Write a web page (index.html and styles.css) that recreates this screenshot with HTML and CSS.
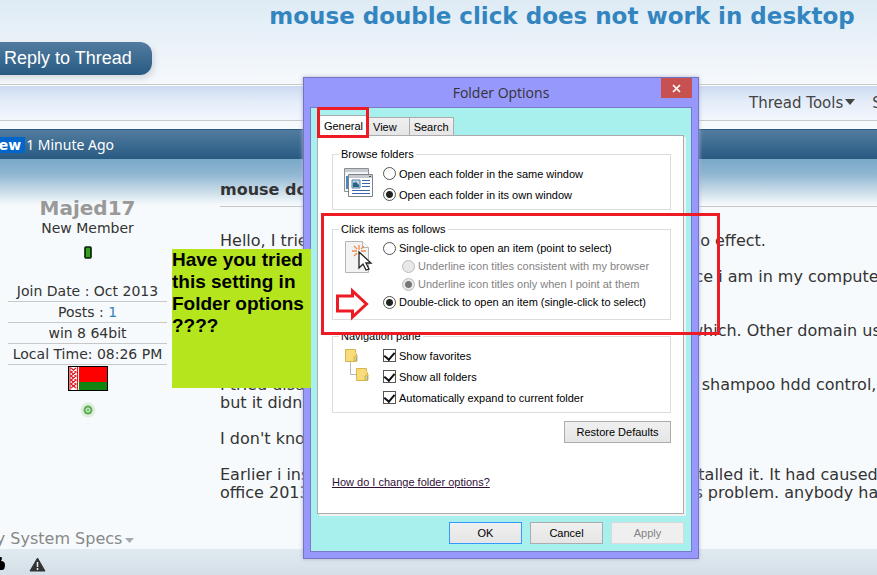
FILE: index.html
```
<!DOCTYPE html>
<html lang="en">
<head>
    <meta charset="UTF-8">
    <meta name="viewport" content="width=device-width, initial-scale=1.0">
    <title>mouse double click does not work in desktop</title>
    <link rel="stylesheet" href="styles.css">
</head>
<body>
    <div class="page">
        <header class="thread-head">
            <h1>mouse double click does not work in desktop</h1>
            <button type="button" class="reply">Reply to Thread</button>
        </header>

        <nav class="toolbar">
            <a href="#">Thread Tools<svg width="10" height="6" viewBox="0 0 10 6"><path d="M0 0h10L5 6z" fill="#444"/></svg></a>
            <a href="#">Search Thread</a>
        </nav>

        <article class="post">
            <div class="post-head"><span class="new">New</span><time>1 Minute Ago</time></div>
            <div class="post-main">
                <aside class="user">
                    <h2>Majed17</h2>
                    <p class="rank">New Member</p>
                    <svg class="rep" width="8" height="13" viewBox="0 0 8 13"><rect x="1" y="1" width="6" height="11" rx="1" fill="#32a01c" stroke="#061c04" stroke-width="1.6"/></svg>
                    <ul>
                        <li>Join Date : Oct 2013</li>
                        <li>Posts : <a href="#">1</a></li>
                        <li>win 8 64bit</li>
                        <li>Local Time: 08:26 PM</li>
                    </ul>
                    <svg class="flag" width="40" height="25" viewBox="0 0 40 25">
                        <path fill="#000" d="M0 0h40v25H0z"/>
                        <path fill="#f00" d="M1 1h38v15H1z"/>
                        <path fill="#128412" d="M1 16h38v8H1z"/>
                        <path fill="#fff" d="M1 1h10v23H1z"/>
                        <path fill="none" stroke="#e01c24" stroke-width="1.2" d="M2 1v23M9.500 1v23M3 2l5 4-5 4 5 4-5 4 5 4M8 2L3 6l5 4-5 4 5 4-5 4"/>
                    </svg>
                    <svg class="ring" width="16" height="16" viewBox="0 0 16 16">
                        <circle cx="8" cy="8" r="7.500" fill="#dfeede"/>
                        <circle cx="8" cy="8" r="4.500" fill="#5fb054"/>
                        <circle cx="8" cy="8" r="2" fill="#7cc272" stroke="#d8efd4"/>
                    </svg>
                </aside>
                <section class="message">
                    <h3>mouse double click</h3>
                    <p><span>Hello, I tried</span><span>no effect.</span></p>
                    <p class="tall"><span></span><span>ice i am in my computer</span></p>
                    <p class="tall"><span></span><span>which. Other domain users</span></p>
                    <p class="joined"><span>I tried disabling</span><span>r shampoo hdd control,</span></p>
                    <p><span>but it didn't</span></p>
                    <p><span>I don't know</span></p>
                    <p class="joined"><span>Earlier i installed</span><span>stalled it. It had caused</span></p>
                    <p><span>office 2013</span><span>is problem. anybody has</span></p>
                </section>
            </div>
            <a href="#" class="specs">My System Specs<svg width="9" height="5" viewBox="0 0 9 5"><path d="M0 0h9L4.500 5z" fill="#aaa"/></svg></a>
        </article>

        <footer class="post-foot">
            <svg width="14" height="15" viewBox="0 0 14 15"><path d="M0 4h6l3-4c3 0 2 2 1 4 3 0 4 2 4 4 0 3-1 5-3 5H0z" fill="#000"/></svg>
            <svg width="17" height="15" viewBox="0 0 17 15"><path d="M8.500 1L16 14H1z" fill="#333" stroke="#333" stroke-linejoin="round"/><path d="M8.500 5v5M8.500 11v2" stroke="#e8eef2" stroke-width="1.500"/></svg>
        </footer>
    </div>

    <div class="dialog" role="dialog" aria-labelledby="dialog-title">
        <div class="titlebar">
            <span id="dialog-title">Folder Options</span>
            <button type="button" class="close" aria-label="Close"><svg width="9" height="9" viewBox="0 0 9 9"><path d="M1 1l7 7M8 1L1 8" stroke="#fff" stroke-width="1.700"/></svg></button>
        </div>
        <div class="client">
            <div class="tabs" role="tablist">
                <button type="button" role="tab" aria-selected="true" class="active">General</button>
                <button type="button" role="tab">View</button>
                <button type="button" role="tab">Search</button>
            </div>
            <form class="panel">
                <fieldset>
                    <legend>Browse folders</legend>
                    <div class="group">
                        <svg class="pic" width="30" height="30" viewBox="0 0 30 30">
                            <path d="M.5.500h24v23H.5z" fill="#f4f6f8" stroke="#8b9096"/>
                            <path d="M1 1h23v3H1z" fill="#c4cacf"/>
                            <path d="M3 8v13" stroke="#4a86bd" stroke-width="2"/>
                            <path d="M4.500 6.500h24v22h-24z" fill="#fff" stroke="#7d8389"/>
                            <path d="M5 7h23v3H5z" fill="#c4cacf"/>
                            <path d="M25 8.500h2" stroke="#4d5358"/>
                            <path d="M8 12h8v8H8z" fill="#b9d9f0" stroke="#5d7f9e"/>
                            <path d="M9 19v-4l3-1 3 3v2z" fill="#2c6484"/>
                            <path d="M18 12.500h8M18 15.500h8M18 18.500h8M8 22.500h18M8 25.500h18" stroke="#3b66ad"/>
                        </svg>
                        <div class="options">
                            <label><input type="radio" name="browse">Open each folder in the same window</label>
                            <label><input type="radio" name="browse" checked>Open each folder in its own window</label>
                        </div>
                    </div>
                </fieldset>
                <fieldset class="clicks">
                    <legend>Click items as follows</legend>
                    <div class="group">
                        <svg class="pic" width="30" height="34" viewBox="0 0 30 34">
                            <path d="M1.500 1.500h17l6 6v25h-23z" fill="#f3f3f3" stroke="#b5b5b5"/>
                            <path d="M18.500 1.500v6h6" fill="#fff" stroke="#b5b5b5"/>
                            <path d="M15 5v5M8 11h5M17 11h5M10 6l3 3M20 6l-3 3M10 16l3-3" stroke="#f08a50" stroke-width="1.300"/>
                            <path d="M15 12v16l4-4 3 6 3-1-3-6h5z" fill="#fff" stroke="#222" stroke-width="1.300"/>
                        </svg>
                        <div class="options">
                            <label><input type="radio" name="click">Single-click to open an item (point to select)</label>
                            <label class="sub"><input type="radio" name="underline" disabled>Underline icon titles consistent with my browser</label>
                            <label class="sub"><input type="radio" name="underline" disabled checked>Underline icon titles only when I point at them</label>
                            <label><input type="radio" name="click" checked>Double-click to open an item (single-click to select)</label>
                        </div>
                    </div>
                </fieldset>
                <fieldset>
                    <legend>Navigation pane</legend>
                    <div class="group">
                        <svg class="pic nav-pic" width="30" height="36" viewBox="0 0 30 36">
                            <path d="M6.500 14v12.500H13" fill="none" stroke="#b8b8b8"/>
                            <path d="M1.500 1.500h10v3l1 1v8h-11z" fill="#f8dc7c" stroke="#d9b34c"/>
                            <path d="M10 13V9l3-2v6z" fill="#f3cd60" stroke="#d9b34c"/>
                            <path d="M12.500 9v4" stroke="#6fb7d8"/>
                            <path d="M12.500 20.500h10v3l1 1v8h-11z" fill="#f8dc7c" stroke="#d9b34c"/>
                            <path d="M21 32v-4l3-2v6z" fill="#f3cd60" stroke="#d9b34c"/>
                            <path d="M23.500 28v4" stroke="#6fb7d8"/>
                        </svg>
                        <div class="options">
                            <label><input type="checkbox" checked>Show favorites</label>
                            <label><input type="checkbox" checked>Show all folders</label>
                            <label><input type="checkbox" checked>Automatically expand to current folder</label>
                        </div>
                    </div>
                </fieldset>
                <button type="button" class="btn restore">Restore Defaults</button>
                <a href="#" class="help">How do I change folder options?</a>
            </form>
            <div class="actions">
                <button type="button" class="btn ok">OK</button>
                <button type="button" class="btn">Cancel</button>
                <button type="button" class="btn" disabled>Apply</button>
            </div>
        </div>
    </div>

    <div class="mark mark-tab"></div>
    <div class="mark mark-clicks"></div>
    <svg class="arrow" width="35" height="34" viewBox="0 0 35 34"><path d="M2.500 9h15V4l14 13-14 13v-6h-15z" fill="none" stroke="#ed1c24" stroke-width="3"/></svg>
    <p class="note">Have you tried this setting in Folder options ????</p>
</body>
</html>
```
FILE: styles.css
```
* {
    box-sizing: border-box;
}

body {
    margin: 0;
    overflow: hidden;
    background: #f7fafc;
    color: #333;
    font-family: Verdana, "DejaVu Sans", sans-serif;
    font-size: 16px;
}

h1, h2, h3, p, ul {
    margin: 0;
    padding: 0;
}

a {
    color: inherit;
    text-decoration: none;
}

.page {
    min-height: 100vh;
    display: flex;
    flex-direction: column;
    overflow: hidden;
}

/* thread header */
.thread-head {
    height: 85px;
    background: linear-gradient(#deebf5, #f6f9fc);
    border-bottom: 1px solid #c8c8c8;
}

.thread-head h1 {
    padding-left: 247px;
    color: #3385c0;
    font-size: 23px;
    line-height: 32px;
    text-align: center;
    white-space: nowrap;
}

.reply {
    display: block;
    height: 33px;
    margin: 10px 0 0 -20px;
    padding: 0 20px 0 24px;
    border: 0;
    border-radius: 12px;
    background: linear-gradient(#527c9f, #285a82);
    box-shadow: 2px 3px 6px #d0d6dc;
    color: #fff;
    font-family: "Liberation Sans", Arial, sans-serif;
    font-size: 18px;
}

.toolbar {
    display: flex;
    justify-content: flex-end;
    gap: 17px;
    height: 36px;
    margin-right: -104px;
    border-top: 1px solid #fff;
    border-bottom: 1px solid #c8c8c8;
    background: linear-gradient(#ccdaf0, #e6eefa 50%, #f2f6fd);
    color: #444;
    font-size: 15px;
    line-height: 34px;
    white-space: nowrap;
}

.toolbar svg {
    margin: 0 0 3px 2px;
}

/* post */
.post {
    flex: 1;
    margin-top: 8px;
}

.post-head {
    display: flex;
    align-items: center;
    height: 30px;
    margin-left: -13px;
    border-top: 1px solid #285a82;
    background: linear-gradient(#527c9f, #285a82);
    color: #fff;
    font-size: 14px;
}

.post-head time {
    font-family: "Noto Sans", "Open Sans", sans-serif;
}

.new {
    padding-right: 4px;
    margin-right: 1px;
    background: #0066cc;
    font-weight: bold;
    line-height: 16px;
}

.post-main {
    display: flex;
    height: 370px;
    background: linear-gradient(#7aa8c8, #8fb6d1 15px, #f7fafc 46px);
}

.user {
    flex: none;
    width: 175px;
    padding: 36px 8px 0;
    display: flex;
    flex-direction: column;
    align-items: center;
    font-size: 14px;
}

.user h2 {
    color: #999;
    font-size: 20px;
    line-height: 26px;
}

.rank {
    line-height: 14px;
}

.rep {
    margin-top: 11px;
}

.user ul {
    width: 100%;
    margin-top: 22px;
    list-style: none;
    text-align: center;
}

.user li {
    border-bottom: 1px solid #c8c8c8;
    line-height: 20px;
    white-space: nowrap;
}

.user li a {
    color: #3385c0;
}

.flag {
    margin-top: 1px;
}

.ring {
    margin-top: 11px;
}

.message {
    flex: 1;
    min-width: 0;
    padding: 18px 0 0 45px;
}

.message h3 {
    margin-bottom: 25px;
    padding-bottom: 3px;
    border-bottom: 1px solid #c8c8c8;
    font-size: 16px;
    line-height: 26px;
}

.message p {
    display: grid;
    grid-template-columns: 470px 1fr;
    margin-bottom: 18px;
    line-height: 18px;
    white-space: nowrap;
}

.message .tall {
    margin-bottom: 36px;
}

.message .joined {
    margin-bottom: 0;
}

.specs {
    display: block;
    margin-left: -18px;
    color: #888;
    line-height: 20px;
}

.specs svg {
    margin: 0 0 1px 3px;
}

.post-foot {
    display: flex;
    align-items: flex-end;
    gap: 24px;
    height: 26px;
    margin-left: -9px;
    padding-bottom: 3px;
    background: linear-gradient(#e0eaf0, #d5dfe7);
}

/* folder options window */
.dialog {
    position: absolute;
    left: 303px;
    top: 77px;
    width: 396px;
    padding: 0 6px 6px;
    border: 1px solid #7474c6;
    background: #9698fb;
    box-shadow: 0 0 4px #b0b4c8;
    color: #000;
    font-family: "Liberation Sans", Arial, sans-serif;
    font-size: 11px;
}

.dialog button {
    color: inherit;
    font-family: inherit;
    font-size: inherit;
}

.titlebar {
    display: flex;
    justify-content: center;
    height: 29px;
    color: #333;
    font-family: "Open Sans", "Noto Sans", sans-serif;
    font-size: 14px;
    line-height: 29px;
}

.close {
    position: absolute;
    top: 0;
    right: 6px;
    display: flex;
    align-items: center;
    justify-content: center;
    width: 31px;
    height: 20px;
    padding: 0;
    border: 0;
    background: #c75050;
}

.client {
    padding: 7px 7px 7px 6px;
    border: 1px solid #7a7ac8;
    background: #a8f0ee;
}

.tabs {
    display: flex;
    align-items: flex-end;
    padding-left: 1px;
}

.tabs button {
    height: 18px;
    padding: 0 4px;
    border: 1px solid #acacac;
    border-bottom: 0;
    border-right: 0;
    background: linear-gradient(#f0f0f0, #e5e5e5);
}

.tabs button:nth-child(2) {
    padding-right: 12px;
}

.tabs button:last-child {
    border-right: 1px solid #acacac;
}

.tabs .active {
    height: 20px;
    min-width: 50px;
    background: #fff;
}

.panel {
    display: flex;
    flex-direction: column;
    padding: 12px 12px 25px 14px;
    border: 1px solid #acacac;
    background: #fff;
    box-shadow: 2px 2px 0 #eef2f0;
}

fieldset {
    min-width: 0;
    margin: 0 0 13px;
    padding: 3px 0 4px 11px;
    border: 1px solid #dcdcdc;
}

legend {
    margin-left: -5px;
    padding: 0 2px;
    line-height: 12px;
}

.group {
    display: flex;
    gap: 9px;
}

.pic {
    margin-top: 5px;
}

.options label {
    display: flex;
    align-items: center;
    gap: 3px;
    height: 21px;
    white-space: nowrap;
}

.clicks {
    margin-bottom: 10px;
    padding: 4px 0 8px 11px;
}

.clicks .pic {
    margin-top: 1px;
}

.nav-pic {
    margin-top: 3px;
}

.clicks label {
    height: 18px;
}

.options .sub {
    margin-left: 19px;
    color: #838383;
}

input {
    appearance: none;
    flex: none;
    width: 13px;
    height: 13px;
    margin: 0;
    border: 1px solid #555;
    background: #fff;
}

input[type="radio"] {
    border-radius: 50%;
}

input[type="radio"]:checked {
    background: radial-gradient(circle, #222 0 3px, #fff 4px);
}

input[type="radio"]:disabled {
    border-color: #bbb;
    background: #e8e8e8;
}

input[type="radio"]:disabled:checked {
    background: radial-gradient(circle, #777 0 3px, #e8e8e8 4px);
}

input[type="checkbox"] {
    display: flex;
    justify-content: center;
}

input[type="checkbox"]:checked::before {
    content: "";
    width: 5px;
    height: 8px;
    border: solid #111;
    border-width: 0 2px 2px 0;
    transform: rotate(40deg);
}

.btn {
    width: 73px;
    height: 22px;
    padding: 0;
    border: 1px solid #acacac;
    background: linear-gradient(#f0f0f0, #e5e5e5);
}

.restore {
    align-self: flex-end;
    width: 107px;
    margin-top: -5px;
}

.help {
    align-self: flex-start;
    margin-top: 33px;
    color: #301038;
    line-height: 12px;
    text-decoration: underline;
}

.actions {
    display: flex;
    justify-content: flex-end;
    gap: 8px;
    padding-top: 8px;
}

.ok {
    border-color: #3399ff;
}

.dialog .btn:disabled {
    border-color: #d9d9d9;
    background: #efefef;
    color: #838383;
}

/* annotations drawn over the window */
.mark {
    position: absolute;
    border: 3px solid #ed1c24;
}

.mark-tab {
    left: 317px;
    top: 107px;
    width: 52px;
    height: 31px;
}

.mark-clicks {
    left: 321px;
    top: 213px;
    width: 399px;
    height: 122px;
}

.arrow {
    position: absolute;
    left: 335px;
    top: 287px;
}

.note {
    position: absolute;
    left: 172px;
    top: 249px;
    width: 139px;
    height: 139px;
    background: #b5e61d;
    color: #000;
    font-family: "Liberation Sans", Arial, sans-serif;
    font-size: 19px;
    font-weight: bold;
    line-height: 22px;
}
```
